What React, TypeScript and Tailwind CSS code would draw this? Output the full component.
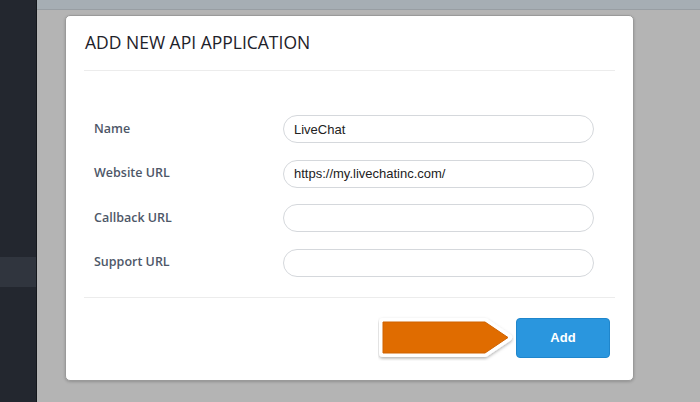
import { useState } from 'react';

type Field = { label: string; value: string };

const initialFields: Field[] = [
  { label: 'Name', value: 'LiveChat' },
  { label: 'Website URL', value: 'https://my.livechatinc.com/' },
  { label: 'Callback URL', value: '' },
  { label: 'Support URL', value: '' },
];

function PointerArrow() {
  return (
    <svg width="136" height="46" viewBox="0 0 136 46" className="mr-[2px] shrink-0">
      <defs>
        <filter id="arrowShadow" x="-10%" y="-30%" width="120%" height="160%">
          <feDropShadow dx="0" dy="1.5" stdDeviation="1.8" floodColor="#000" floodOpacity="0.3" />
        </filter>
      </defs>
      <polygon
        points="5,7 107,7 130,22.5 107,38 5,38"
        fill="#fff"
        stroke="#fff"
        strokeWidth="8"
        strokeLinejoin="round"
        filter="url(#arrowShadow)"
      />
      <polygon
        points="5,7 107,7 130,22.5 107,38 5,38"
        fill="#e06c00"
        stroke="#cf6200"
        strokeWidth="1"
        strokeLinejoin="round"
      />
    </svg>
  );
}

export default function App() {
  const [fields, setFields] = useState<Field[]>(initialFields);

  function update(index: number, value: string) {
    setFields(prev => prev.map((f, i) => (i === index ? { ...f, value } : f)));
  }

  return (
    <div className="flex h-[402px] w-[700px] overflow-hidden bg-[#b4b4b4]">
      {/* left nav */}
      <div className="flex w-[37px] shrink-0 flex-col border-r border-[#15181d] bg-[#23272f]">
        <div className="h-[257px]" />
        <div className="h-[30px] bg-[#30353e]" />
      </div>

      <div className="flex flex-1 flex-col">
        <div className="h-[10px] border-b border-[#989ea3] bg-[#a6aeb4]" />

        <div className="pl-[28px] pt-[5px]">
          <div className="flex h-[366px] w-[569px] flex-col rounded-[5px] border border-[#9a9a9a] bg-white shadow-[0_1px_3px_rgba(0,0,0,0.2)]">
            <div className="mx-[18px] border-b border-[#ececec] pb-[16px] pt-[14px]">
              <h1 className="pl-[1px] font-['Open_Sans',sans-serif] text-[17.5px] font-[450] leading-[24px] text-[#1d2129]">
                ADD NEW API APPLICATION
              </h1>
            </div>

            <div className="mx-[18px] flex flex-col gap-[16.5px] border-b border-[#ececec] pb-[20px] pl-[10px] pr-[21px] pt-[44px]">
              {fields.map((f, i) => (
                <div key={f.label} className="flex items-center">
                  <label className="w-[189px] font-['Open_Sans',sans-serif] text-[12.5px] font-semibold text-[#4e5768]">
                    {f.label}
                  </label>
                  <input
                    value={f.value}
                    onChange={e => update(i, e.target.value)}
                    className="h-[28px] w-[311px] rounded-full border border-[#d5d8dc] bg-white px-[10px] font-['Liberation_Sans',Arial,sans-serif] text-[13px] text-[#222] outline-none"
                  />
                </div>
              ))}
            </div>

            <div className="flex items-center justify-end pr-[23px] pt-[17px]">
              <PointerArrow />
              <button className="h-[40px] w-[94px] rounded-[4px] border border-[#1f86cc] bg-[#2a96de] font-['Liberation_Sans',Arial,sans-serif] text-[13px] font-bold text-white">
                Add
              </button>
            </div>
          </div>
        </div>
      </div>
    </div>
  );
}
